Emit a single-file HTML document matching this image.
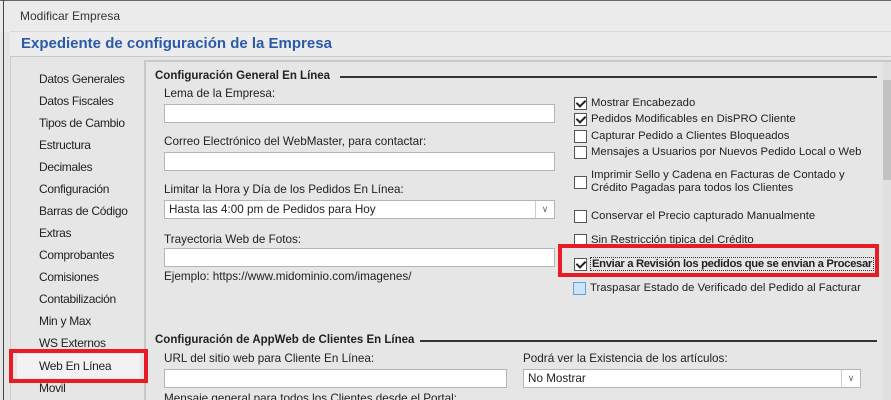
<!DOCTYPE html>
<html style="overflow:hidden"><head><style>
html,body{margin:0;width:891px;height:400px;overflow:hidden}
body{background:#e6e6e6;font-family:"Liberation Sans",sans-serif;font-size:11.7px;color:#222;position:relative}
.a{position:absolute;white-space:nowrap}
.inp{position:absolute;background:#fff;border:1px solid #b4b4b4;height:17px;box-sizing:border-box}
.cb{position:absolute;width:13px;height:13px;background:#fff;border:1px solid #555;box-sizing:border-box}
.ck::after{content:"";position:absolute;left:3px;top:0px;width:4px;height:7px;border:solid #222;border-width:0 2px 2px 0;transform:rotate(45deg)}
.nav{position:absolute;left:39px;font-size:12px;color:#222;letter-spacing:-0.3px}
.h{font-weight:bold;color:#222;font-size:11.5px}
.r{font-size:11.3px}
.dd{position:absolute;right:0;top:0;width:18px;height:17px;border-left:1px solid #ccc;font-size:9px;color:#666;text-align:center;line-height:17px}
</style></head><body>
<div class="a" style="left:0;top:0;width:891px;height:31px;background:#ebebeb;border-top:1px solid #666"></div>
<div class="a" style="left:3px;top:0;width:1px;height:400px;background:#444"></div>
<div class="a" style="left:20px;top:9px;font-size:12px;color:#333">Modificar Empresa</div>
<div class="a" style="left:10px;top:31px;width:881px;height:24px;background:#ececec;border-top:1px solid #d8d8d8;border-bottom:1px solid #c8c8c8"></div>
<div class="a" style="left:21px;top:35px;font-size:15px;font-weight:bold;color:#2a5aa8">Expediente de configuración de la Empresa</div>
<div class="a" style="left:10px;top:57px;width:1px;height:343px;background:#ccc"></div>
<div class="a" style="left:144px;top:60px;width:747px;height:340px;border-left:2px solid #c8c8c8;border-top:2px solid #c8c8c8;box-sizing:border-box"></div>
<div class="nav" style="top:72px">Datos Generales</div>
<div class="nav" style="top:94px">Datos Fiscales</div>
<div class="nav" style="top:116px">Tipos de Cambio</div>
<div class="nav" style="top:138px">Estructura</div>
<div class="nav" style="top:160px">Decimales</div>
<div class="nav" style="top:182px">Configuración</div>
<div class="nav" style="top:204px">Barras de Código</div>
<div class="nav" style="top:226px">Extras</div>
<div class="nav" style="top:248px">Comprobantes</div>
<div class="nav" style="top:270px">Comisiones</div>
<div class="nav" style="top:292px">Contabilización</div>
<div class="nav" style="top:314px">Min y Max</div>
<div class="nav" style="top:336px">WS Externos</div>
<div class="a" style="left:17px;top:354px;width:123px;height:24px;background:#f2f2f2"></div>
<div class="nav" style="top:359px">Web En Línea</div>
<div class="nav" style="top:381px">Movil</div>
<div class="a" style="left:9px;top:349px;width:139px;height:34px;border:4px solid #e81c24;box-sizing:border-box"></div>

<div class="a h" style="left:155px;top:70px">Configuración General En Línea</div>
<div class="a" style="left:340px;top:76px;width:537px;height:2px;background:#333"></div>
<div class="a" style="left:164px;top:87px">Lema de la Empresa:</div>
<div class="inp" style="left:164px;top:104px;width:391px;height:19px"></div>
<div class="a" style="left:164px;top:135px">Correo Electrónico del WebMaster, para contactar:</div>
<div class="inp" style="left:164px;top:152px;width:391px;height:19px"></div>
<div class="a" style="left:164px;top:183px">Limitar la Hora y Día de los Pedidos En Línea:</div>
<div class="inp" style="left:164px;top:200px;width:391px;height:19px"><span style="position:absolute;left:4px;top:2px">Hasta las 4:00 pm de Pedidos para Hoy</span><div class="dd">&#8744;</div></div>
<div class="a" style="left:164px;top:233px">Trayectoria Web de Fotos:</div>
<div class="inp" style="left:164px;top:248px;width:391px;height:19px"></div>
<div class="a" style="left:164px;top:270px">Ejemplo: https://www.midominio.com/imagenes/</div>

<div class="cb ck" style="left:574px;top:97px"></div><div class="a r" style="left:591px;top:97px">Mostrar Encabezado</div>
<div class="cb ck" style="left:574px;top:113px"></div><div class="a r" style="left:591px;top:113px">Pedidos Modificables en DisPRO Cliente</div>
<div class="cb" style="left:574px;top:130px"></div><div class="a r" style="left:591px;top:130px">Capturar Pedido a Clientes Bloqueados</div>
<div class="cb" style="left:574px;top:146px"></div><div class="a r" style="left:591px;top:146px">Mensajes a Usuarios por Nuevos Pedido Local o Web</div>
<div class="cb" style="left:574px;top:176px"></div><div class="a r" style="left:591px;top:169px;line-height:13px">Imprimir Sello y Cadena en Facturas de Contado y<br>Crédito Pagadas para todos los Clientes</div>
<div class="cb" style="left:574px;top:210px"></div><div class="a r" style="left:591px;top:210px">Conservar el Precio capturado Manualmente</div>
<div class="cb" style="left:574px;top:234px"></div><div class="a r" style="left:591px;top:234px">Sin Restricción tipica del Crédito</div>
<div class="a" style="left:558px;top:244px;width:321px;height:33px;border:4px solid #e81c24;box-sizing:border-box;background:#e6e6e6"></div>
<div class="cb ck" style="left:574px;top:258px"></div><div class="a r" style="left:590px;top:257px;border:1px dotted #333;padding:0 1px;font-weight:bold;letter-spacing:-0.35px">Enviar a Revisión los pedidos que se envian a Procesar</div>
<div class="cb" style="left:573px;top:282px;background:#cce4f7;border-color:#6a9fd4"></div><div class="a r" style="left:590px;top:282px">Traspasar Estado de Verificado del Pedido al Facturar</div>

<div class="a" style="left:883px;top:62px;width:8px;height:338px;background:#e0e0e0"></div>
<div class="a" style="left:883px;top:80px;width:8px;height:100px;background:#c2c2c2"></div>

<div class="a h" style="left:155px;top:334px">Configuración de AppWeb de Clientes En Línea</div>
<div class="a" style="left:420px;top:340px;width:457px;height:2px;background:#333"></div>
<div class="a" style="left:164px;top:352px">URL del sitio web para Cliente En Línea:</div>
<div class="a" style="left:523px;top:352px">Podrá ver la Existencia de los artículos:</div>
<div class="inp" style="left:164px;top:369px;width:343px;height:19px"></div>
<div class="inp" style="left:523px;top:369px;width:338px;height:19px"><span style="position:absolute;left:4px;top:2px">No Mostrar</span><div class="dd">&#8744;</div></div>
<div class="a" style="left:164px;top:392px">Mensaje general para todos los Clientes desde el Portal:</div>
</body></html>
